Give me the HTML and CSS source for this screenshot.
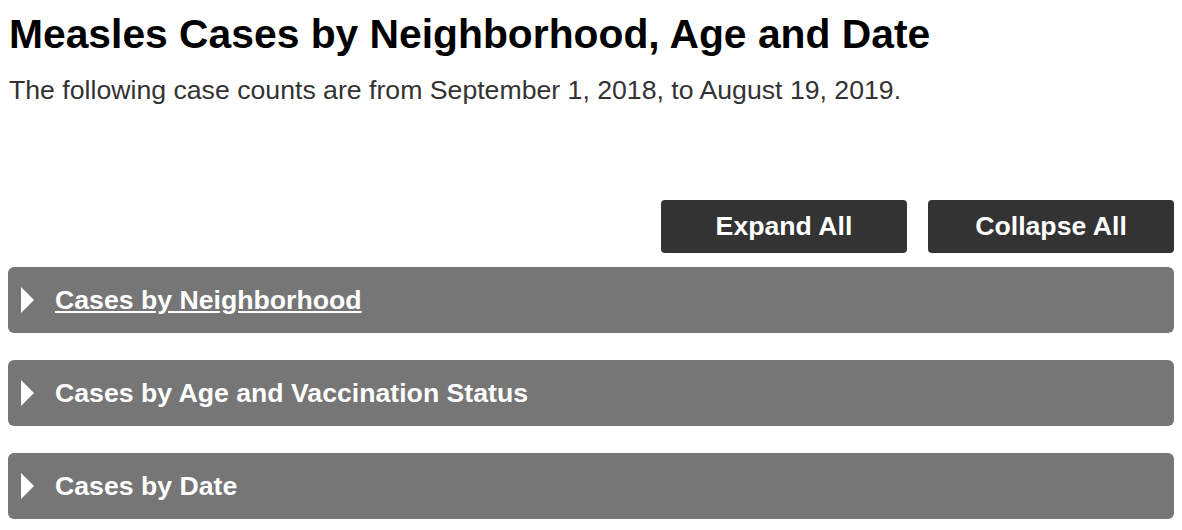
FILE: index.html
```html
<!DOCTYPE html>
<html lang="en">
<head>
<meta charset="utf-8">
<title>Measles Cases</title>
<link rel="stylesheet" href="styles.css">
</head>
<body>
<h1 class="title">Measles Cases by Neighborhood, Age and Date</h1>
<p class="intro">The following case counts are from September 1, 2018, to August 19, 2019.</p>
<div class="controls">
  <button class="btn">Expand All</button>
  <button class="btn">Collapse All</button>
</div>
<div class="accordion">
  <div class="panel">
    <span class="arrow"></span>
    <a class="panel-title link" href="#">Cases by Neighborhood</a>
  </div>
  <div class="panel">
    <span class="arrow"></span>
    <span class="panel-title">Cases by Age and Vaccination Status</span>
  </div>
  <div class="panel">
    <span class="arrow"></span>
    <span class="panel-title">Cases by Date</span>
  </div>
</div>
</body>
</html>
```
FILE: styles.css
```css
html, body {
  margin: 0;
  padding: 0;
  background: #fff;
}
body {
  padding: 0 8px;
  font-family: "Liberation Sans", Arial, sans-serif;
}
.title {
  margin: 0;
  padding-top: 12px;
  padding-left: 1px;
  font-size: 40.8px;
  line-height: 44px;
  font-weight: bold;
  color: #000;
}
.intro {
  margin: 19px 0 0 1px;
  font-size: 26.67px;
  line-height: 30px;
  color: #333;
}
.controls {
  display: flex;
  justify-content: flex-end;
  gap: 21px;
  margin-top: 95px;
}
.btn {
  width: 246px;
  height: 53px;
  background: #333;
  color: #fff;
  border: none;
  border-radius: 4px;
  font-family: "Liberation Sans", Arial, sans-serif;
  font-size: 26.67px;
  font-weight: bold;
  padding: 0;
}
.accordion {
  display: flex;
  flex-direction: column;
  gap: 27px;
  margin-top: 14px;
}
.panel {
  height: 66px;
  background: #767676;
  border-radius: 6px;
  display: flex;
  align-items: center;
  padding-left: 13px;
}
.arrow {
  width: 0;
  height: 0;
  border-top: 13px solid transparent;
  border-bottom: 13px solid transparent;
  border-left: 13px solid #fff;
  margin-right: 21px;
}
.panel-title {
  color: #fff;
  font-size: 26.67px;
  font-weight: bold;
}
.link {
  text-decoration: underline;
}
```
